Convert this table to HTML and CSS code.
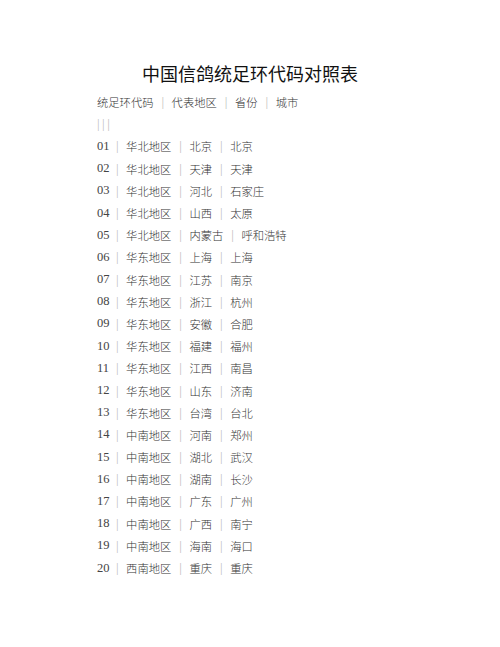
FILE: index.html
```html
<!DOCTYPE html>
<html lang="zh">
<head>
<meta charset="utf-8">
<title>中国信鸽统足环代码对照表</title>
<link rel="stylesheet" href="styles.css">
</head>
<body>
<main class="page">
  <h1 class="title">中国信鸽统足环代码对照表</h1>
  <div class="table">
    <div class="row"><span>统足环代码</span><span class="sep">|</span><span>代表地区</span><span class="sep">|</span><span>省份</span><span class="sep">|</span><span>城市</span></div>
    <div class="row"><span class="bars">|||</span></div>
    <div class="row"><span class="num">01</span><span class="sep">|</span><span>华北地区</span><span class="sep">|</span><span>北京</span><span class="sep">|</span><span>北京</span></div>
    <div class="row"><span class="num">02</span><span class="sep">|</span><span>华北地区</span><span class="sep">|</span><span>天津</span><span class="sep">|</span><span>天津</span></div>
    <div class="row"><span class="num">03</span><span class="sep">|</span><span>华北地区</span><span class="sep">|</span><span>河北</span><span class="sep">|</span><span>石家庄</span></div>
    <div class="row"><span class="num">04</span><span class="sep">|</span><span>华北地区</span><span class="sep">|</span><span>山西</span><span class="sep">|</span><span>太原</span></div>
    <div class="row"><span class="num">05</span><span class="sep">|</span><span>华北地区</span><span class="sep">|</span><span>内蒙古</span><span class="sep">|</span><span>呼和浩特</span></div>
    <div class="row"><span class="num">06</span><span class="sep">|</span><span>华东地区</span><span class="sep">|</span><span>上海</span><span class="sep">|</span><span>上海</span></div>
    <div class="row"><span class="num">07</span><span class="sep">|</span><span>华东地区</span><span class="sep">|</span><span>江苏</span><span class="sep">|</span><span>南京</span></div>
    <div class="row"><span class="num">08</span><span class="sep">|</span><span>华东地区</span><span class="sep">|</span><span>浙江</span><span class="sep">|</span><span>杭州</span></div>
    <div class="row"><span class="num">09</span><span class="sep">|</span><span>华东地区</span><span class="sep">|</span><span>安徽</span><span class="sep">|</span><span>合肥</span></div>
    <div class="row"><span class="num">10</span><span class="sep">|</span><span>华东地区</span><span class="sep">|</span><span>福建</span><span class="sep">|</span><span>福州</span></div>
    <div class="row"><span class="num">11</span><span class="sep">|</span><span>华东地区</span><span class="sep">|</span><span>江西</span><span class="sep">|</span><span>南昌</span></div>
    <div class="row"><span class="num">12</span><span class="sep">|</span><span>华东地区</span><span class="sep">|</span><span>山东</span><span class="sep">|</span><span>济南</span></div>
    <div class="row"><span class="num">13</span><span class="sep">|</span><span>华东地区</span><span class="sep">|</span><span>台湾</span><span class="sep">|</span><span>台北</span></div>
    <div class="row"><span class="num">14</span><span class="sep">|</span><span>中南地区</span><span class="sep">|</span><span>河南</span><span class="sep">|</span><span>郑州</span></div>
    <div class="row"><span class="num">15</span><span class="sep">|</span><span>中南地区</span><span class="sep">|</span><span>湖北</span><span class="sep">|</span><span>武汉</span></div>
    <div class="row"><span class="num">16</span><span class="sep">|</span><span>中南地区</span><span class="sep">|</span><span>湖南</span><span class="sep">|</span><span>长沙</span></div>
    <div class="row"><span class="num">17</span><span class="sep">|</span><span>中南地区</span><span class="sep">|</span><span>广东</span><span class="sep">|</span><span>广州</span></div>
    <div class="row"><span class="num">18</span><span class="sep">|</span><span>中南地区</span><span class="sep">|</span><span>广西</span><span class="sep">|</span><span>南宁</span></div>
    <div class="row"><span class="num">19</span><span class="sep">|</span><span>中南地区</span><span class="sep">|</span><span>海南</span><span class="sep">|</span><span>海口</span></div>
    <div class="row"><span class="num">20</span><span class="sep">|</span><span>西南地区</span><span class="sep">|</span><span>重庆</span><span class="sep">|</span><span>重庆</span></div>
  </div>
</main>
</body>
</html>
```
FILE: styles.css
```css
html, body {
  margin: 0;
  padding: 0;
  background: #ffffff;
}

.page {
  width: 500px;
  padding-top: 58px;
  font-family: "Liberation Serif", "Noto Sans CJK SC", serif;
  color: #333333;
}

.title {
  margin: 0;
  text-align: center;
  font-family: "Noto Sans CJK SC", sans-serif;
  font-weight: 400;
  font-size: 18px;
  line-height: 30px;
  color: #111111;
}

.table {
  margin-top: 3px;
  padding-left: 97px;
}

.row {
  display: flex;
  align-items: center;
  height: 22.2px;
  font-size: 11.3px;
  font-family: "Liberation Serif", "Noto Sans CJK SC", serif;
  font-weight: 300;
  white-space: nowrap;
}

.num {
  font-size: 12.5px;
  font-weight: 400;
  color: #444444;
  width: 11px;
}

.sep {
  margin: 0 7.5px 0 8px;
  color: #bdbdbd;
  font-size: 13px;
  font-weight: 300;
}

.bars {
  color: #bdbdbd;
  font-size: 13px;
  font-weight: 300;
  letter-spacing: 2.5px;
}
```
